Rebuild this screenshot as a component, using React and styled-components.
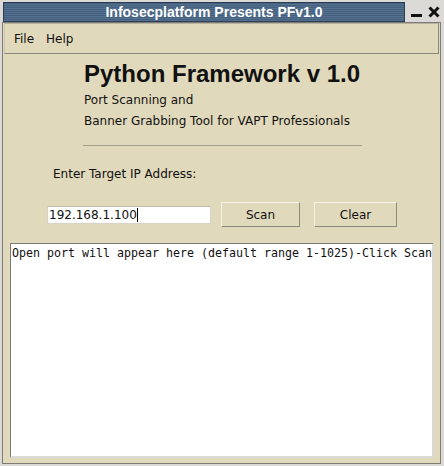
import React from 'react'
import styled, { createGlobalStyle } from 'styled-components'

const GlobalStyle = createGlobalStyle`
    html, body {
        margin: 0;
        padding: 0;
        background: #dcdad6;
    }
    * {
        box-sizing: border-box;
    }
`

const beige = '#e1d9bb'

const Frame = styled.div`
    width: 444px;
    height: 466px;
    display: flex;
    flex-direction: column;
    background: #dcdad6;
    overflow: hidden;
`

const TitleRow = styled.div`
    display: flex;
    align-items: stretch;
    height: 20px;
    margin: 2px 0 0 3px;
`

const TitleBar = styled.div`
    flex: 0 0 402px;
    display: flex;
    align-items: center;
    justify-content: center;
    padding-left: 20px;
    border: 1px solid #2c3c52;
    background: repeating-linear-gradient(
        to bottom,
        #44607f 0px,
        #44607f 1px,
        #55718f 1px,
        #55718f 2px
    );
    color: #ffffff;
    font-family: "Liberation Sans", Arial, sans-serif;
    font-weight: bold;
    font-size: 14px;
`

const Controls = styled.div`
    flex: 1;
    display: flex;
    align-items: center;
    gap: 6px;
    padding-left: 6px;
`

const Client = styled.div`
    flex: 1;
    display: flex;
    flex-direction: column;
    margin: 0 3px 2px 2px;
    border: 1px solid #7e7c76;
    background: ${beige};
`

const MenuBar = styled.div`
    height: 31px;
    display: flex;
    align-items: center;
    padding-left: 3px;
    border-top: 1px solid #b7b2a0;
    border-left: 1px solid #cfc8ae;
    border-bottom: 1px solid #8a877c;
    border-right: 1px solid #8a877c;
    margin: 0 1px;
`

const MenuItem = styled.span`
    padding: 0 6px;
    font-family: "DejaVu Sans", sans-serif;
    font-size: 12px;
    color: #111;
`

const Content = styled.div`
    flex: 1;
    display: flex;
    flex-direction: column;
    padding: 6px 6px 5px 7px;
`

const Header = styled.div`
    margin-left: 74px;
    width: 278px;
    display: flex;
    flex-direction: column;
`

const Heading = styled.h1`
    margin: 0;
    font-family: "Liberation Sans", Arial, sans-serif;
    font-weight: bold;
    font-size: 24px;
    line-height: 28px;
    color: #111;
`

const SubLine = styled.div`
    font-family: "DejaVu Sans", sans-serif;
    font-size: 12px;
    line-height: 21px;
    color: #111;
    margin-top: ${p => p.$first ? '2px' : '0'};
`

const Rule = styled.hr`
    margin: 13px 0 0 -1px;
    border: none;
    height: 1px;
    background: #a29e92;
`

const Prompt = styled.div`
    margin: 21px 0 0 43px;
    font-family: "DejaVu Sans", sans-serif;
    font-size: 12px;
    line-height: 15px;
    color: #111;
`

const InputRow = styled.div`
    display: flex;
    align-items: center;
    margin: 20px 0 0 37px;
    height: 25px;
`

const Entry = styled.div`
    width: 164px;
    height: 18px;
    background: #ffffff;
    border: 1px solid #d8d3c3;
    border-top-color: #c3bead;
    display: flex;
    align-items: center;
    padding-left: 1px;
    font-family: "DejaVu Sans", sans-serif;
    font-size: 12px;
    color: #111;
`

const Caret = styled.span`
    display: inline-block;
    width: 1px;
    height: 14px;
    background: #000;
`

const Button = styled.button`
    width: ${p => p.$w}px;
    height: 25px;
    margin-left: ${p => p.$gap}px;
    padding: 0;
    background: ${beige};
    border: 1px solid;
    border-color: #f7f3e6 #8c897e #8c897e #f7f3e6;
    font-family: "DejaVu Sans", sans-serif;
    font-size: 12px;
    color: #111;
`

const Output = styled.div`
    flex: 1;
    margin-top: 16px;
    background: #ffffff;
    border-style: solid;
    border-width: 1px 2px 2px 1px;
    border-color: #7a7a78 #d9d9d6 #d9d9d6 #7a7a78;
    padding: 2px 0 0 1px;
    overflow: hidden;
    white-space: pre;
    font-family: "DejaVu Sans Mono", monospace;
    font-size: 11.63px;
    line-height: 14px;
    color: #111;
`

function App() {
    return (
        <Frame>
            <GlobalStyle />
            <TitleRow>
                <TitleBar>Infosecplatform Presents PFv1.0</TitleBar>
                <Controls>
                    <svg width="11" height="12" viewBox="0 0 11 12">
                        <rect x="0" y="8" width="11" height="3" fill="#111" />
                    </svg>
                    <svg width="12" height="12" viewBox="0 0 12 12">
                        <path d="M1.5 1.5 L10.5 10.5 M10.5 1.5 L1.5 10.5" stroke="#111" strokeWidth="3" />
                    </svg>
                </Controls>
            </TitleRow>
            <Client>
                <MenuBar>
                    <MenuItem>File</MenuItem>
                    <MenuItem>Help</MenuItem>
                </MenuBar>
                <Content>
                    <Header>
                        <Heading>Python Framework v 1.0</Heading>
                        <SubLine $first>Port Scanning and</SubLine>
                        <SubLine>Banner Grabbing Tool for VAPT Professionals</SubLine>
                        <Rule />
                    </Header>
                    <Prompt>Enter Target IP Address:</Prompt>
                    <InputRow>
                        <Entry>192.168.1.100<Caret /></Entry>
                        <Button $w={79} $gap={10}>Scan</Button>
                        <Button $w={83} $gap={14}>Clear</Button>
                    </InputRow>
                    <Output>Open port will appear here (default range 1-1025)-Click Scan</Output>
                </Content>
            </Client>
        </Frame>
    )
}

export default App
